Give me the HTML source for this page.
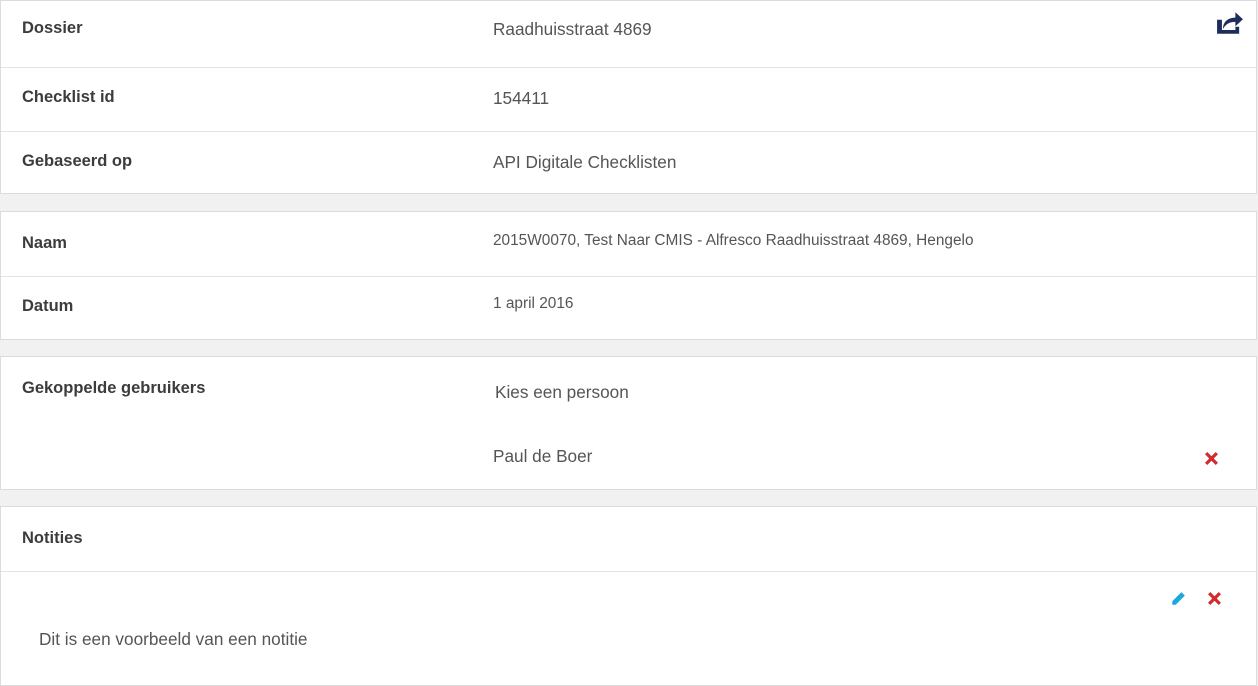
<!DOCTYPE html>
<html><head><style>
body{margin:0;background:#f1f1f1;font-family:"Liberation Sans",sans-serif;width:1258px;height:681px;overflow:hidden;position:relative}
.card{position:absolute;left:0;width:1257px;background:#fff;border:1px solid #dcdcdc;box-sizing:border-box}
.row{position:absolute;left:0;right:0;border-bottom:1px solid #e3e3e3}
.l{position:absolute;left:21px;font-size:16.5px;font-weight:bold;color:#3c3c3c}
.v{position:absolute;left:492px;font-size:17.2px;color:#555}
.s{font-size:15.4px}
</style></head><body>
<div class="card" style="top:0;height:194px">
 <div class="row" style="top:0;height:66px"></div>
 <div class="row" style="top:66px;height:64px"></div>
 <div class="l" style="top:18px">Dossier</div><div class="v" style="top:18px">Raadhuisstraat 4869</div>
 <div class="l" style="top:87px">Checklist id</div><div class="v" style="top:87px">154411</div>
 <div class="l" style="top:151px">Gebaseerd op</div><div class="v" style="top:151px">API Digitale Checklisten</div>
 <svg style="position:absolute;left:1215px;top:10px" width="28" height="24" viewBox="0 0 26 22"><path d="M1 8h4.5v9.5h12.5v-3h3.5v6.5H1z" fill="#1f2d5c"/><path d="M6.5 16.5c0-6.5 4.5-10.5 11.5-10.5V1l7 6.5-7 6.5V10c-5 0-8.5 1.5-11.5 6.5z" fill="#1f2d5c"/></svg>
</div>
<div class="card" style="top:211px;height:129px">
 <div class="row" style="top:0;height:64px"></div>
 <div class="l" style="top:22px">Naam</div><div class="v s" style="top:20px">2015W0070, Test Naar CMIS - Alfresco Raadhuisstraat 4869, Hengelo</div>
 <div class="l" style="top:85px">Datum</div><div class="v s" style="top:83px">1 april 2016</div>
</div>
<div class="card" style="top:356px;height:134px">
 <div class="l" style="top:22px">Gekoppelde gebruikers</div>
 <div class="v" style="top:25px;left:494px">Kies een persoon</div>
 <div class="v" style="top:89px">Paul de Boer</div>
 <svg style="position:absolute;left:1203px;top:94px" width="15" height="15" viewBox="0 0 14 14"><path d="M2 2l10 10M12 2L2 12" stroke="#d22b2b" stroke-width="3"/></svg>
</div>
<div class="card" style="top:506px;height:180px">
 <div class="row" style="top:0;height:64px"></div>
 <div class="l" style="top:22px">Notities</div>
 <svg style="position:absolute;left:1169px;top:84px" width="16" height="16" viewBox="0 0 14 14"><path d="M10 1l3 3-8 8H2v-3z" fill="#1ba7e0"/></svg>
 <svg style="position:absolute;left:1206px;top:84px" width="15" height="15" viewBox="0 0 14 14"><path d="M2 2l10 10M12 2L2 12" stroke="#d22b2b" stroke-width="3"/></svg>
 <div class="v" style="top:122px;left:38px">Dit is een voorbeeld van een notitie</div>
</div>
</body></html>
